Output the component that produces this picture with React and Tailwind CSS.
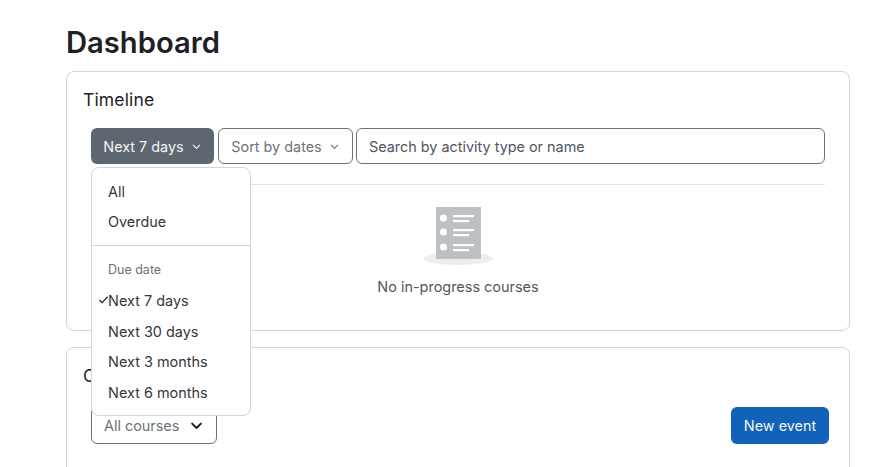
const font = { fontFamily: "Inter, 'Noto Sans', sans-serif" };

function Chevron({ className, strokeWidth = 1.2 }) {
  return (
    <svg viewBox="0 0 12 12" fill="none" stroke="currentColor" strokeWidth={strokeWidth} className={className}>
      <path d="M2.5 4.5 6 8l3.5-3.5" strokeLinecap="round" strokeLinejoin="round" />
    </svg>
  );
}

function EmptyIcon() {
  return (
    <svg viewBox="0 0 72 60" className="w-[72px] h-[60px]">
      <ellipse cx="36" cy="51.5" rx="35" ry="6.5" fill="#eceded" />
      <rect x="14" y="0" width="45" height="52" fill="#bdc1c5" />
      {[11, 25, 40].map((y) => (
        <g key={y} fill="#fff">
          <circle cx="21.5" cy={y} r="3.5" />
          <rect x="31" y={y - 3} width="21" height="2.2" />
          <rect x="31" y={y + 2} width="16" height="2.2" />
        </g>
      ))}
    </svg>
  );
}

function DropdownItem({ label, checked, className = "" }) {
  return (
    <div className={`relative pl-[16px] h-[30.5px] flex items-center text-[14.45px] text-[#33373b] ${className}`}>
      {checked && (
        <svg viewBox="0 0 12 12" fill="none" stroke="#1d2125" strokeWidth="1.3" className="absolute left-[6px] top-[8px] w-[11px] h-[11px]">
          <path d="M1.5 6.5 4.5 9.5 10.5 3" />
        </svg>
      )}
      {label}
    </div>
  );
}

export default function App() {
  return (
    <div style={font} className="relative w-[884px] h-[467px] overflow-hidden bg-white pl-[66px] pr-[34px] pt-[23px] text-[#1d2125]">
      <h1 className="text-[29.2px] leading-[40px] font-semibold mb-[8px]">Dashboard</h1>

      <section className="h-[260px] border border-[#d5d5d5] rounded-[8px] px-[16px] pt-[16px]">
        <h2 className="text-[17.5px] leading-[24px] font-normal tracking-[0.15px]">Timeline</h2>
        <div className="relative ml-[8px] mr-[8px] mt-[16px]">
          <div className="flex gap-[3px] h-[36px] text-[14.4px]">
            <button className="w-[123px] pt-[1px] rounded-[6px] bg-[#5e6670] text-[#f3f4f5] flex items-center justify-center gap-[7px]">
              Next 7 days
              <Chevron className="w-[11px] h-[11px]" />
            </button>
            <button className="w-[135px] ml-[1px] pt-[1px] rounded-[6px] border border-[#6a737b] text-[#6a737b] flex items-center justify-center gap-[7px]">
              Sort by dates
              <Chevron className="w-[11px] h-[11px]" />
            </button>
            <div className="flex-1 pt-[1px] rounded-[6px] border border-[#6a737b] pl-[12px] flex items-center text-[#4f5660]">
              Search by activity type or name
            </div>
          </div>
          <div className="border-t border-[#dee2e6] mt-[20px]" />
          <div className="flex flex-col items-center mt-[22px]">
            <EmptyIcon />
            <p className="text-[14.45px] leading-[20px] text-[#4f5660] mt-[10px]">No in-progress courses</p>
          </div>

          <div className="absolute left-0 top-[39px] z-10 w-[160px] h-[249px] bg-white border border-[#d5d5d5] rounded-[8px] pt-[8.5px]">
            <DropdownItem label="All" />
            <DropdownItem label="Overdue" />
            <div className="border-t border-[#d5d5d5] mt-[7.5px]" />
            <div className="pl-[16px] h-[33px] mt-[7.5px] flex items-center text-[12.5px] text-[#6a737b]">Due date</div>
            <DropdownItem label="Next 7 days" checked className="-mt-[0.75px]" />
            <DropdownItem label="Next 30 days" />
            <DropdownItem label="Next 3 months" />
            <DropdownItem label="Next 6 months" />
          </div>
        </div>
      </section>

      <section className="h-[160px] mt-[16px] border border-[#d5d5d5] rounded-[8px] px-[16px] pt-[16px]">
        <h2 className="text-[17.5px] leading-[24px] font-normal">Calendar</h2>
        <div className="flex justify-between items-center ml-[8px] mr-[4px] mt-[19px]">
          <div className="w-[126px] h-[37px] rounded-[6px] border border-[#6a737b] text-[14.4px] text-[#6a737b] pl-[12px] flex items-center gap-[10px]">
            All courses
            <Chevron strokeWidth={1.6} className="w-[15px] h-[15px] text-[#1d2125]" />
          </div>
          <button className="w-[98px] h-[37px] rounded-[6px] bg-[#1162b8] text-[#f3f6fa] text-[14.4px]">New event</button>
        </div>
      </section>
    </div>
  );
}
